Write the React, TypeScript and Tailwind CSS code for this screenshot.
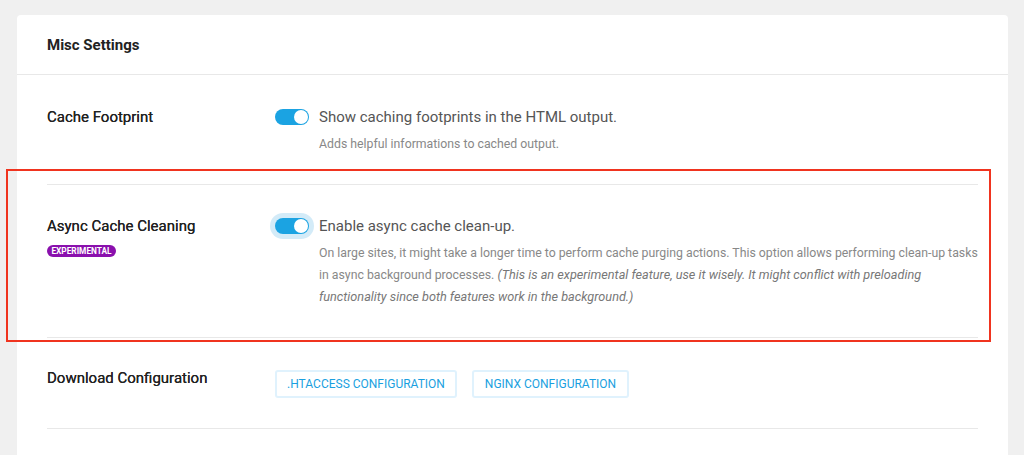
import React from "react";

function Toggle({ focus }: { focus?: boolean }) {
  return (
    <div className={`shrink-0 rounded-full ${focus ? "p-[5px] bg-[#d3ebf8] -m-[5px]" : ""}`}>
      <div className="w-[34px] h-[16px] rounded-full bg-[#1ba3e2] relative">
        <div className="absolute right-[1px] top-[1px] w-[14px] h-[14px] rounded-full bg-white" />
      </div>
    </div>
  );
}

export default function App() {
  return (
    <div
      className="w-[1024px] h-[455px] bg-[#f0f0f0] pt-[15px] pl-[17px] overflow-hidden relative"
      style={{ fontFamily: "Roboto, 'Liberation Sans', sans-serif" }}
    >
      <div className="w-[991px] bg-white rounded-t-[4px] min-h-[460px]">
        <div className="h-[60px] flex items-center px-[30px] border-b border-[#e8e8e8]">
          <h2 className="text-[15px] font-bold text-[#222] leading-none pt-[1px]">Misc Settings</h2>
        </div>
        <div className="px-[30px]">
          <div className="flex pt-[31px] pb-[29px] border-b border-[#e8e8e8]">
            <div className="w-[228px] shrink-0 text-[15px] font-normal text-[#222] leading-[22px] [text-shadow:0_0_0.3px_#222]">
              Cache Footprint
            </div>
            <div className="flex gap-[10px]">
              <div className="pt-[3px]">
                <Toggle />
              </div>
              <div>
                <div className="text-[15px] font-normal text-[#555] leading-[22px]">
                  Show caching footprints in the HTML output.
                </div>
                <div className="text-[12.3px] text-[#888] leading-[22px] mt-[5px]">
                  Adds helpful informations to cached output.
                </div>
              </div>
            </div>
          </div>
          <div className="flex pt-[30px] pb-[29px] border-b border-[#e8e8e8]">
            <div className="w-[228px] shrink-0">
              <div className="text-[15px] font-normal text-[#222] leading-[22px] [text-shadow:0_0_0.3px_#222]">
                Async Cache Cleaning
              </div>
              <div className="mt-[6px] inline-flex items-center h-[12px] w-[69px] justify-center rounded-full bg-[#8a10ad] text-white text-[8.3px] font-bold leading-none">
                EXPERIMENTAL
              </div>
            </div>
            <div className="flex gap-[10px]">
              <div className="pt-[3px]">
                <Toggle focus />
              </div>
              <div>
                <div className="text-[15px] font-normal text-[#555] leading-[22px]">
                  Enable async cache clean-up.
                </div>
                <div className="text-[12.3px] text-[#888] leading-[22px] mt-[5px]">
                  On large sites, it might take a longer time to perform cache purging actions. This option allows
                  performing clean-up tasks in async background processes.{" "}
                  <em className="text-[#777] text-[12.7px]">
                    (This is an experimental feature, use it wisely. It might conflict with preloading functionality
                    since both features work in the background.)
                  </em>
                </div>
              </div>
            </div>
          </div>
          <div className="flex pt-[28px] pb-[30px] border-b border-[#e8e8e8]">
            <div className="w-[228px] shrink-0 text-[15px] font-normal text-[#222] leading-[22px] pt-[1px] [text-shadow:0_0_0.3px_#222]">
              Download Configuration
            </div>
            <div className="flex gap-[15px] pt-[4px]">
              <button className="h-[28px] w-[182px] rounded-[3px] border-2 border-[#e0f2fd] text-[#1a9fe0] text-[12px] font-normal uppercase">
                .htaccess Configuration
              </button>
              <button className="h-[28px] w-[157px] rounded-[3px] border-2 border-[#e0f2fd] text-[#1a9fe0] text-[12px] font-normal uppercase">
                Nginx Configuration
              </button>
            </div>
          </div>
        </div>
      </div>
      <div className="absolute left-[6px] top-[169px] w-[985px] h-[173px] border-2 border-[#f0341f] pointer-events-none" />
    </div>
  );
}
